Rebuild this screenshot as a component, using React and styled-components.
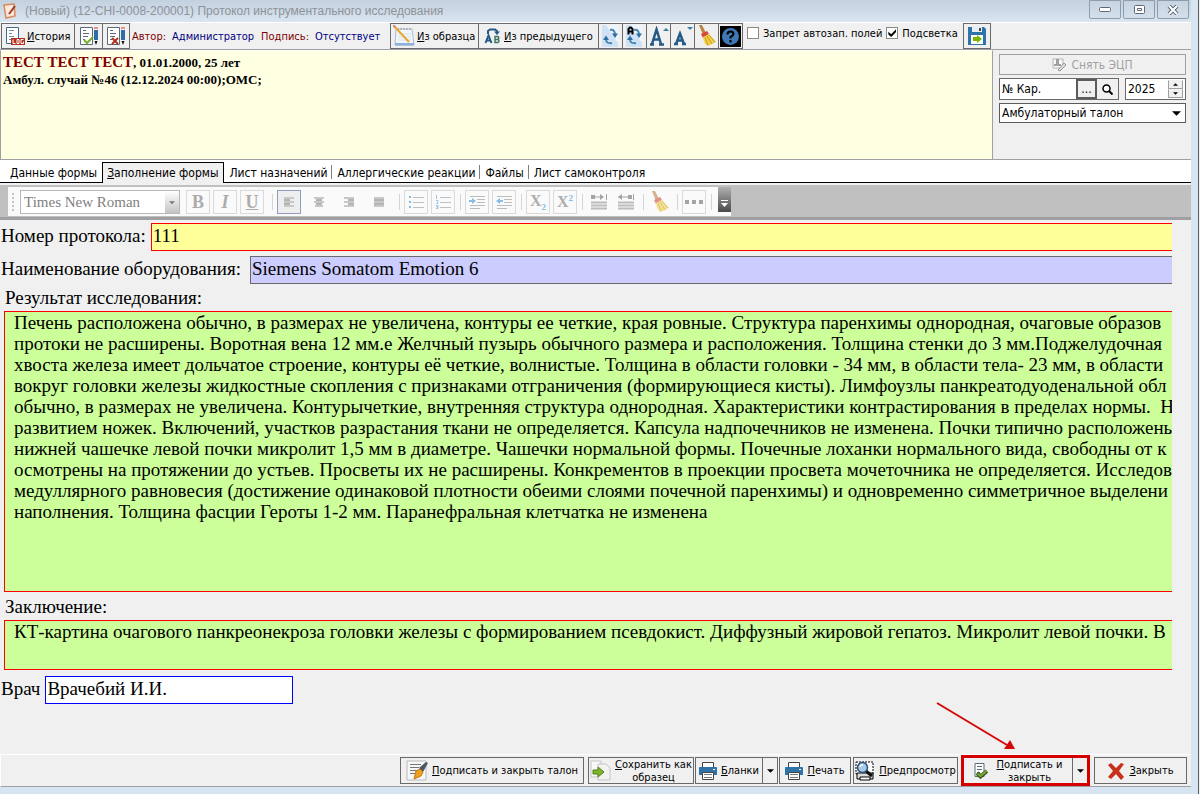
import React, { useState } from "react";
import styled, { createGlobalStyle, css } from "styled-components";

const ui = `"DejaVu Sans Condensed", "DejaVu Sans", sans-serif`;
const serif = `"Liberation Serif", "Times New Roman", serif`;

const Global = createGlobalStyle`
  * { box-sizing: border-box; }
  body { margin: 0; background: #f0f0f0; font-family: ${ui}; font-size: 11px; color: #000; }
  button, input, select, textarea { font: inherit; color: inherit; margin: 0; border-radius: 0; outline: none; }
  svg { display: block; flex: none; }
`;

const Frame = styled.div`
  min-height: 100vh;
  display: flex;
  flex-direction: column;
  padding: 0 7px 7px 0;
  margin-right: 1px;
  background: #d7e4f2;
  border-right: 1px solid #5c5c5c;
`;

/* title bar */

const TitleBar = styled.header`
  display: flex;
  align-items: center;
  height: 22px;
  padding: 0 2px 0 3px;
  background: linear-gradient(#c3d0dd, #d9e5f1);
`;

const Title = styled.h1`
  flex: 1;
  margin: 0 0 0 8px;
  font: 12px "Liberation Sans", sans-serif;
  color: #8d9299;
`;

const WinButtons = styled.div`
  display: flex;
  gap: 2px;
  align-self: flex-start;
`;

const WinButton = styled.button`
  width: 32px;
  height: 19px;
  padding: 0;
  display: flex;
  align-items: center;
  justify-content: center;
  border: 1px solid #8e9cab;
  border-radius: 0 0 2px 2px;
  background: linear-gradient(#c6d3e0, #d3dfec);
`;

/* top toolbar */

const Toolbar = styled.div`
  display: flex;
  align-items: center;
  height: 28px;
  padding: 0 0 0 1px;
  background: #f0f0f0;
  border-top: 1px solid #fff;
  border-bottom: 1px solid #a0a0a4;
`;

const ToolButton = styled.button`
  width: ${(p) => p.$w || 25}px;
  height: 26px;
  margin-right: ${(p) => (p.$last ? 0 : -1)}px;
  padding: 0 0 0 ${(p) => p.$pad || 0}px;
  display: flex;
  align-items: center;
  justify-content: ${(p) => (p.$pad ? "flex-start" : "center")};
  gap: 2px;
  background: #f0f0f0;
  border: 1px solid #696969;
  white-space: nowrap;
`;

const Info = styled.span`
  color: ${(p) => (p.$value ? "#000080" : "#800000")};
  margin-right: ${(p) => (p.$value ? 7 : 6)}px;
  white-space: nowrap;
`;

const InfoGroup = styled.div`
  display: flex;
  width: 260px;
  padding-left: 2px;
`;

const Check = styled.label`
  display: flex;
  align-items: center;
  gap: 4px;
  padding-bottom: 6px;
  margin-left: 4px;
  white-space: nowrap;
  input {
    appearance: none;
    width: 12px;
    height: 12px;
    border: 1px solid #8a8a8a;
    background: #fff;
    display: grid;
    place-content: center;
  }
  input:checked::before {
    content: "";
    width: 8px;
    height: 8px;
    background: #000;
    clip-path: polygon(0 35%, 35% 65%, 100% 0, 100% 35%, 35% 100%, 0 68%);
  }
`;

const Gap = styled.i`
  width: 5px;
`;

/* patient header */

const Header = styled.section`
  display: flex;
  height: 110px;
  background: #f0f0f0;
  border-bottom: 1px solid #a0a0a4;
`;

const Patient = styled.div`
  flex: 1;
  padding: 3px 0 0 2px;
  background: #ffffe1;
  border-left: 1px solid #a0a0a4;
  border-right: 1px solid #a0a0a4;
  border-top: 1px solid #fff;
  font: bold 13px/17px ${serif};
  p { margin: 0; }
  b { font-size: 15px; color: #800000; }
`;

const Side = styled.div`
  width: 198px;
  padding: 4px 5px 0 6px;
  display: flex;
  flex-direction: column;
  gap: 3px;
  font-size: 12px;
`;

const SignButton = styled.button`
  height: 21px;
  display: flex;
  align-items: center;
  justify-content: center;
  gap: 4px;
  background: #f0f0f0;
  border: 1px solid #a0a0a0;
  font-size: 12px;
  color: #a0a0a0;
`;

const SideRow = styled.div`
  display: flex;
  gap: 6px;
`;

const CardBox = styled.div`
  display: flex;
  flex: 1;
  min-width: 0;
  height: 22px;
  border: 1px solid #696969;
  background: #fff;
  input {
    flex: 1;
    width: 0;
    min-width: 0;
    border: 0;
    padding: 0 2px;
  }
`;

const CardButton = styled.button`
  flex: none;
  width: 21px;
  padding: 0;
  display: grid;
  place-items: center;
  background: #f0f0f0;
  border: ${(p) => (p.$strong ? "2px solid #5c5c5c" : "0")};
`;

const YearBox = styled.div`
  display: flex;
  width: 61px;
  height: 22px;
  padding: 1px 2px;
  border: 1px solid #696969;
  background: #fff;
  input {
    flex: 1;
    width: 0;
    min-width: 0;
    border: 0;
    padding: 0;
    background: transparent;
  }
`;

const Spin = styled.div`
  display: flex;
  flex-direction: column;
  width: 15px;
  button {
    flex: 1;
    padding: 0;
    display: grid;
    place-items: center;
    background: #f0f0f0;
    border: 1px solid #a0a0a0;
    border-top-color: #f0f0f0;
  }
`;

const SelectWrap = styled.div`
  position: relative;
  height: 20px;
  border: 1px solid #5c5c5c;
  background: #fff;
  select {
    appearance: none;
    width: 100%;
    height: 100%;
    border: 0;
    padding: 0 2px;
    background: transparent;
  }
  svg {
    position: absolute;
    right: 4px;
    top: 7px;
    pointer-events: none;
  }
`;

/* tabs */

const Tabs = styled.nav`
  display: flex;
  align-items: flex-end;
  height: 23px;
  padding-left: 5px;
  background: #fff;
  border-bottom: 1px solid #000;
  font-size: 12px;
`;

const Tab = styled.button`
  height: 18px;
  padding: 0 5px;
  border: 0;
  background: transparent;
  white-space: nowrap;
  ${(p) => p.$sep && css`
    background: linear-gradient(#808080, #808080) right 1px / 1px 14px no-repeat;
  `}
  ${(p) => p.$active && css`
    height: 21px;
    margin-bottom: -1px;
    padding: 0 5px 0 4px;
    background: #f0f0f0;
    border: 1px solid #000;
    border-bottom: 0;
  `}
`;

/* editor toolbar */

const EditBar = styled.div`
  display: flex;
  height: 37px;
  padding-left: 8px;
  background: #c0c0c0;
  border-top: 2px solid #f0f0f0;
  border-bottom: 3px solid #a0a0a4;
`;

const EditTools = styled.div`
  display: flex;
  align-items: center;
  margin: 2px 0 1px;
  padding-left: 4px;
  background: #fafafa;
`;

const Combo = styled.div`
  position: relative;
  width: 160px;
  height: 24px;
  margin: 0 6px 0 5px;
  border: 1px solid #b8b8b8;
  background: #fff;
  select {
    appearance: none;
    width: 100%;
    height: 100%;
    padding: 0 3px;
    border: 0;
    background: linear-gradient(#fff, #c4c4c4) right / 14px 100% no-repeat;
    font: 15px ${serif};
    color: #808080;
  }
  svg {
    position: absolute;
    right: 4px;
    top: 10px;
    pointer-events: none;
  }
`;

const EditButton = styled.button`
  width: 24px;
  height: 24px;
  margin-right: ${(p) => (p.$wide ? 6 : 3)}px;
  padding: 0;
  display: grid;
  place-items: center;
  background: ${(p) => (p.$active ? "#eeeef0" : "transparent")};
  border: 1px solid ${(p) => (p.$active ? "#8f9dbd" : p.$plain ? "transparent" : "#dadada")};
  font: bold 18px/20px ${serif};
  color: #acacac;
`;

const Script = styled.span`
  font: bold 16px/20px ${serif};
  sub, sup {
    font: bold 9px/8px ${serif};
    color: #86bde2;
  }
`;

const Sep = styled.i`
  width: 1px;
  height: 16px;
  margin: 0 4px 0 2px;
  background: #d4d4d4;
`;

const Grip = styled.i`
  width: 2px;
  height: 18px;
  margin-right: 1px;
  background: repeating-linear-gradient(#c4c4c4 0 2px, transparent 2px 4px);
`;

const More = styled.button`
  align-self: flex-start;
  width: 13px;
  height: 25px;
  margin-left: 2px;
  padding: 0 0 4px;
  display: flex;
  align-items: flex-end;
  justify-content: center;
  border: 0;
  background: linear-gradient(#b0b0b0, #4a4a4a);
`;

const Faded = styled.span`
  opacity: 0.6;
`;

/* form */

const Form = styled.main`
  flex: 1;
  display: flex;
  flex-direction: column;
  padding: 3px 19px 0 0;
  background: #f0f0f0;
  font: 19px/21px ${serif};
`;

const Row = styled.div`
  display: flex;
  align-items: center;
  gap: ${(p) => p.$gap || 5}px;
  height: 28px;
  margin-bottom: 5px;
  padding-left: 1px;
  label { padding-bottom: 3px; }
`;

const Field = styled.input`
  flex: ${(p) => (p.$fixed ? "none" : 1)};
  width: ${(p) => (p.$fixed ? "248px" : "auto")};
  min-width: 0;
  height: 28px;
  padding: 0 1px 3px;
  background: ${(p) => p.$bg};
  border: 1px solid ${(p) => p.$line};
  border-right-width: ${(p) => (p.$fixed ? 1 : 0)}px;
`;

const AreaLabel = styled.label`
  padding-left: 5px;
  height: 22px;
  line-height: 18px;
`;

const Area = styled.textarea`
  display: block;
  height: ${(p) => p.$h}px;
  margin: 0 0 6px 4px;
  padding: 0 0 0 9px;
  resize: none;
  overflow: hidden;
  white-space: pre;
  background: #ccff99;
  border: 1px solid #f00;
  border-right: 0;
`;

/* footer */

const Footer = styled.footer`
  display: flex;
  justify-content: flex-end;
  align-items: center;
  height: 33px;
  padding-right: 4px;
  background: #f0f0f0;
  border-top: 1px solid #fff;
  border-left: 1px solid #fff;
  border-bottom: 1px solid #a0a0a4;
`;

const FootButton = styled.button`
  width: ${(p) => p.$w}px;
  height: 27px;
  margin-left: ${(p) => p.$ml || 0}px;
  padding: 0 2px;
  display: flex;
  align-items: center;
  justify-content: center;
  gap: ${(p) => p.$gap || 4}px;
  background: #f0f0f0;
  border: 1px solid #696969;
  line-height: 13px;
  white-space: nowrap;
`;

const DropButton = styled(FootButton)`
  width: 16px;
  margin-left: -1px;
  padding: 0;
`;

const Marked = styled.div`
  position: relative;
  display: flex;
  margin: 0 4px 0 3px;
  border: 2px solid #d40000;
  outline: 1px solid #d40000;
  outline-offset: -3px;
`;

const Arrow = styled.svg`
  position: absolute;
  right: 72px;
  bottom: 34px;
`;

/* icons */

const Tri = ({ w = 7, up, fill = "#000" }) => (
  <svg width={w} height={(w + 1) / 2} viewBox="0 0 8 4">
    <path d={up ? "M0 4L4 0L8 4Z" : "M0 0H8L4 4Z"} fill={fill} />
  </svg>
);

const LogIcon = () => (
  <svg width="20" height="20" viewBox="0 0 20 20">
    <path d="M1.500 1.500h12v16h-12z" fill="#fff" stroke="#3e6c8c" />
    <path d="M4 4.500h5M4 7.500h3M4 10.500h5M4 13.500h2" stroke="#7b8994" />
    <path d="M6 12h14v7H6z" fill="#b5301c" />
    <path d="M8 13.500v4h2.500M12 13.500h2v4h-2zM18.500 13.500H16v4h2.500v-2" fill="none" stroke="#fff" />
  </svg>
);

const SheetPencil = ({ bad }) => (
  <svg width="20" height="20" viewBox="0 0 20 20">
    <path d="M1.500 1.500h12v17h-12z" fill="#fff" stroke="#5b6b78" />
    <path d="M4 4.500h3M4 7.500h6M4 10.500h5M4 13.500h2" stroke="#5b6b78" />
    <path d="M15 1h4v2h-4z" fill="#e89090" />
    <path d="M15 4h4v10h-4z" fill="#2f6ea5" />
    <path d="M15.500 15h3L17 19z" fill="#111" />
    {bad
      ? <path d="M6 12l6 6M12 12l-6 6" stroke="#b5301c" strokeWidth="2" />
      : <path d="M5 14l3 3 6-6" fill="none" stroke="#79ad2a" strokeWidth="2" />}
  </svg>
);

const NoteIcon = () => (
  <svg width="22" height="22" viewBox="0 0 22 22">
    <path d="M3 4h16l2 16H2z" fill="#f2f6fb" stroke="#a9bdd4" />
    <path d="M2 18h19v2.500H2z" fill="#8db2dc" />
    <path d="M5 5V3M8 5V3M11 5V3M14 5V3M17 5V3" stroke="#9a9a9a" />
    <path d="M5 9h13M5 12h13M5 15h13" stroke="#d7e0ea" />
    <path d="M1 1l15 16" stroke="#e9a92c" strokeWidth="2" />
    <path d="M0 0l2.500 2.500" stroke="#c88" strokeWidth="2" />
  </svg>
);

const FromPrevIcon = () => (
  <svg width="18" height="16" viewBox="0 0 18 16">
    <path d="M4 6V3l2-1.500h5L13 3v1" fill="none" stroke="#245a85" strokeWidth="2" />
    <path d="M10 3.500h6L13 7z" fill="#245a85" />
    <path d="M1.500 15l3-7.500 3 7.500M2.500 12.500h4" fill="none" stroke="#245a85" strokeWidth="2" />
    <path d="M11 8.500v6h3q2-1.500 0-3h-3 3q1.500-1.500 0-3z" fill="none" stroke="#3f7560" strokeWidth="1.500" />
  </svg>
);

const RefreshIcon = ({ mark }) => (
  <svg width="17" height="22" viewBox="0 0 17 22">
    <path d="M0 0h16v22H0z" fill="#cfe1f5" />
    <path d="M4 0h12v18z" fill="#eef5fd" />
    <path d="M8 5q5-1 5 5" fill="none" stroke="#4a86ad" strokeWidth="2" />
    <path d="M10 8.500h6L13 13z" fill="#2f6ea5" />
    <path d="M10 18q-6 1-6-4" fill="none" stroke="#4a86ad" strokeWidth="2" />
    <path d="M1 15h6l-3-4.500z" fill="#2f6ea5" />
    {mark && <path d="M2.500 9.500V4L4 2.500h1L6.500 4v5.500M2.500 6.500h4" fill="none" stroke="#000" strokeWidth="2" />}
  </svg>
);

const LetterIcon = ({ small }) => (
  <svg width="20" height="20" viewBox="0 0 20 20">
    {small
      ? <path d="M3 18L7 7.500 11 18M4.500 14.500h5M1 18h4M9 18h4" fill="none" stroke="#245a85" strokeWidth="2.500" />
      : <path d="M3 18L7.500 3.500 12 18M4.500 13.500h7M1 18.500h4M10 18.500h5" fill="none" stroke="#245a85" strokeWidth="2.500" />}
    <path d={small ? "M14 1h6l-3 3z" : "M14 5h6l-3-3z"} fill="#3a7ca8" />
  </svg>
);

const Broom = () => (
  <svg width="20" height="22" viewBox="0 0 20 22">
    <path d="M2 0l3 0 4 8-3 2z" fill="#b98545" />
    <path d="M4 9l6-3 2 3-6 4z" fill="#d64a3c" />
    <path d="M6 12l6-3 7 8-8 4q-4-1-5-9z" fill="#f0cf4a" />
    <path d="M8 12l3 8M10 11l5 8M12 10l6 7" stroke="#c99d22" />
  </svg>
);

const HelpIcon = () => (
  <svg width="21" height="21" viewBox="0 0 21 21">
    <path d="M0 0h21v21H0z" fill="#000" />
    <circle cx="10.500" cy="10.500" r="8.500" fill="#3f78b5" />
    <path d="M7.500 8.500q0-3 3-3t3 2.500q0 1.500-3 3v1.500M10.500 14v2.500" fill="none" stroke="#000" strokeWidth="2" />
  </svg>
);

const SaveIcon = () => (
  <svg width="18" height="18" viewBox="0 0 18 18">
    <path d="M0 0h16l2 2v16H0z" fill="#2f74a8" />
    <path d="M4 0h10v5H4z" fill="#e8eef3" />
    <path d="M11 1h2v3h-2z" fill="#444" />
    <path d="M3 8h12v9H3z" fill="#fff" />
    <path d="M5 10h4V8l5 4-5 4v-2H5z" fill="#79b800" />
  </svg>
);

const SignIcon = () => (
  <svg width="15" height="14" viewBox="0 0 15 14">
    <path d="M1 1h10v9H1z" fill="#f8f8f8" stroke="#b4b4b4" />
    <path d="M4 1h3v5H4zM2 6h7v2H2z" fill="#a0a0a0" />
    <path d="M6 12l6-7 2 2-6 6z" fill="#ddd" stroke="#979797" />
  </svg>
);

const Lines = ({ rows }) => (
  <svg width="16" height="12" viewBox="0 0 16 12">
    {rows.map(([x, w], i) => <rect key={i} x={x} y={1 + i * 2} width={w} height="2" fill={i % 2 ? "#b4b4b4" : "#c8c8c8"} />)}
  </svg>
);

const ListIcon = ({ numbered }) => (
  <svg width="16" height="14" viewBox="0 0 16 14">
    <path d="M5 2.500h11M5 7.500h11M5 12.500h11" stroke="#c0c0c0" />
    {numbered
      ? <path d="M1.500 0v4M1 5.500h2v1.500l-1.500 1.500H3M1 10.500h2v3H1M1 12h2" fill="none" stroke="#9cc6e2" />
      : <path d="M1 1h2v2H1zM1 6h2v2H1zM1 11h2v2H1z" fill="#86bde2" />}
  </svg>
);

const IndentIcon = ({ out }) => (
  <svg width="16" height="14" viewBox="0 0 16 14">
    <path d="M1 1.500h15M8 4.500h8M8 7.500h8M1 10.500h15M1 13.500h10" stroke="#bcbcbc" />
    <path d={out ? "M0 6l4-3v2h3v2H4v2z" : "M7 6L3 3v2H0v2h3v2z"} fill="#86bde2" />
  </svg>
);

const SpacingIcon = ({ out }) => (
  <svg width="18" height="18" viewBox="0 0 18 18">
    <path d="M1 9.500h16M1 12.500h16M1 15.500h16" stroke="#bcbcbc" strokeWidth="2" />
    <path d="M1 4h12M16.500 1v6" stroke="#a4a4a4" />
    <path d={out ? "M1 4l4-3v6zM11 2h4v4h-4z" : "M1 2h4v4H1zM14 4l-4-3v6z"} fill="#a4a4a4" />
  </svg>
);

const PenSheetIcon = () => (
  <svg width="22" height="21" viewBox="0 0 22 21">
    <path d="M1 1h19v19H1z" fill="#f7f7f7" stroke="#b9b9b9" />
    <path d="M4 4.500h11M4 7.500h9M4 10.500h7M4 13.500h5" stroke="#777" />
    <path d="M13 8l7-6 2 1-5 9z" fill="#4f5860" />
    <path d="M8 19l2-8 4-2 3 3-2 4z" fill="#f0a020" stroke="#c07a10" />
  </svg>
);

const CopyIcon = () => (
  <svg width="21" height="21" viewBox="0 0 21 21">
    <path d="M1 1h10v16H1z" fill="#f8f8f8" stroke="#c4c4c4" />
    <path d="M8 4h8l4 4v12H8z" fill="#f2f2f2" stroke="#c4c4c4" />
    <path d="M3 10h5V7l6 5-6 5v-3H3z" fill="#7fb52c" stroke="#4f8212" />
  </svg>
);

const PrinterIcon = () => (
  <svg width="18" height="18" viewBox="0 0 18 18">
    <path d="M3.500 .5h11v6h-11z" fill="#fff" stroke="#444" />
    <path d="M0 6q0-1 1-1h16q1 0 1 1v7H0z" fill="#2f74a8" />
    <path d="M14 7h2v1h-2z" fill="#fff" />
    <path d="M3.500 10.500h11v7h-11z" fill="#fff" stroke="#444" />
    <path d="M5 12.500h8M5 15.500h8" stroke="#777" />
  </svg>
);

const PreviewIcon = () => (
  <svg width="20" height="20" viewBox="0 0 20 20">
    <path d="M1 1h17v12H1z" fill="#fff" stroke="#000" strokeDasharray="2 1" />
    <path d="M2 12h16v6H2z" fill="#dcdcdc" stroke="#000" />
    <path d="M5 16h10v3H5z" fill="#fff" stroke="#000" />
    <path d="M11 10l6 5" stroke="#111" strokeWidth="3" />
    <circle cx="7.500" cy="6.500" r="5" fill="#a9cbe8" stroke="#29527a" strokeWidth="1.500" />
    <path d="M5 6q1-3 3-2" fill="none" stroke="#fff" strokeWidth="1.500" />
  </svg>
);

const SheetCheckIcon = () => (
  <svg width="14" height="16" viewBox="0 0 14 16">
    <path d="M1 .5h9v13H1z" fill="#fff" stroke="#5b6b78" />
    <path d="M3 3.500h5M3 6.500h5M3 9.500h3" stroke="#5b6b78" />
    <path d="M3 10l3.500 3.500L13 8" fill="none" stroke="#3d5a1e" strokeWidth="4" />
    <path d="M3.500 10.500l3 2.500 6-5" fill="none" stroke="#7ba83c" strokeWidth="2" />
  </svg>
);

const CrossIcon = () => (
  <svg width="18" height="18" viewBox="0 0 18 18">
    <path d="M1 3l3-2 5 5 5-5 3 1-5 7 5 6-3 3-5-6-5 5-3-2 5-6z" fill="#c9301c" />
  </svg>
);

const resultText = `Печень расположена обычно, в размерах не увеличена, контуры ее четкие, края ровные. Структура паренхимы однородная, очаговые образов
протоки не расширены. Воротная вена 12 мм.е Желчный пузырь обычного размера и расположения. Толщина стенки до 3 мм.Поджелудочная
хвоста железа имеет дольчатое строение, контуры её четкие, волнистые. Толщина в области головки - 34 мм, в области тела- 23 мм, в области
вокруг головки железы жидкостные скопления с признаками отграничения (формирующиеся кисты). Лимфоузлы панкреатодуоденальной обл
обычно, в размерах не увеличена. Контурычеткие, внутренняя структура однородная. Характеристики контрастирования в пределах нормы.  Н
развитием ножек. Включений, участков разрастания ткани не определяется. Капсула надпочечников не изменена. Почки типично расположены
нижней чашечке левой почки микролит 1,5 мм в диаметре. Чашечки нормальной формы. Почечные лоханки нормального вида, свободны от к
осмотрены на протяжении до устьев. Просветы их не расширены. Конкрементов в проекции просвета мочеточника не определяется. Исследов
медуллярного равновесия (достижение одинаковой плотности обеими слоями почечной паренхимы) и одновременно симметричное выделени
наполнения. Толщина фасции Героты 1-2 мм. Паранефральная клетчатка не изменена`;

const conclusionText =
  "КТ-картина очагового панкреонекроза головки железы с формированием псевдокист. Диффузный жировой гепатоз. Микролит левой почки. В";

const tabs = [
  { key: "data", label: <><u>Д</u>анные формы</> },
  { key: "fill", label: <><u>З</u>аполнение формы</> },
  { key: "orders", label: "Лист назначений", sep: true },
  { key: "allergy", label: "Аллергические реакции", sep: true },
  { key: "files", label: "Файлы", sep: true },
  { key: "self", label: "Лист самоконтроля" },
];

const alignRows = {
  left: [[3, 10], [3, 6], [3, 10], [3, 6], [3, 10]],
  center: [[3, 10], [5, 6], [3, 10], [5, 6], [4, 8]],
  right: [[3, 10], [7, 6], [3, 10], [7, 6], [3, 10]],
  full: [[3, 10], [3, 10], [3, 10], [3, 10], [3, 10]],
};

const TopToolbar = () => {
  const [noAuto, setNoAuto] = useState(false);
  const [highlight, setHighlight] = useState(true);
  return (
    <Toolbar>
      <ToolButton $w={74} $pad={3}><LogIcon /><span><u>И</u>стория</span></ToolButton>
      <ToolButton $w={29} aria-label="Подписать"><SheetPencil /></ToolButton>
      <ToolButton $w={28} $last aria-label="Снять подпись"><SheetPencil bad /></ToolButton>
      <InfoGroup>
        <Info>Автор:</Info>
        <Info $value>Администратор</Info>
        <Info>Подпись:</Info>
        <Info $value>Отсутствует</Info>
      </InfoGroup>
      <ToolButton $w={89} $pad={2}><NoteIcon /><span><u>И</u>з образца</span></ToolButton>
      <ToolButton $w={121} $pad={5}><FromPrevIcon /><span><u>И</u>з предыдущего</span></ToolButton>
      <ToolButton aria-label="Обновить"><RefreshIcon /></ToolButton>
      <ToolButton aria-label="Обновить всё"><RefreshIcon mark /></ToolButton>
      <ToolButton aria-label="Увеличить шрифт"><LetterIcon /></ToolButton>
      <ToolButton aria-label="Уменьшить шрифт"><LetterIcon small /></ToolButton>
      <ToolButton aria-label="Очистить"><Broom /></ToolButton>
      <ToolButton $last aria-label="Справка"><HelpIcon /></ToolButton>
      <Check>
        <input type="checkbox" checked={noAuto} onChange={(e) => setNoAuto(e.target.checked)} />
        Запрет автозап. полей
      </Check>
      <Check>
        <input type="checkbox" checked={highlight} onChange={(e) => setHighlight(e.target.checked)} />
        Подсветка
      </Check>
      <Gap />
      <ToolButton $w={28} $last aria-label="Сохранить"><SaveIcon /></ToolButton>
    </Toolbar>
  );
};

const EditorBar = () => (
  <EditBar>
    <EditTools>
      <Grip />
      <Combo>
        <select aria-label="Шрифт" defaultValue="tnr">
          <option value="tnr">Times New Roman</option>
        </select>
        <Tri w={6} fill="#777" />
      </Combo>
      <EditButton>B</EditButton>
      <EditButton><em>I</em></EditButton>
      <EditButton $wide><u>U</u></EditButton>
      <Sep />
      <EditButton $wide $active aria-label="По левому краю"><Lines rows={alignRows.left} /></EditButton>
      <EditButton $wide $plain aria-label="По центру"><Lines rows={alignRows.center} /></EditButton>
      <EditButton $wide $plain aria-label="По правому краю"><Lines rows={alignRows.right} /></EditButton>
      <EditButton $wide $plain aria-label="По ширине"><Lines rows={alignRows.full} /></EditButton>
      <Sep />
      <EditButton aria-label="Маркеры"><ListIcon /></EditButton>
      <EditButton aria-label="Нумерация"><ListIcon numbered /></EditButton>
      <Sep />
      <EditButton aria-label="Увеличить отступ"><IndentIcon /></EditButton>
      <EditButton aria-label="Уменьшить отступ"><IndentIcon out /></EditButton>
      <Sep />
      <EditButton><Script>X<sub>2</sub></Script></EditButton>
      <EditButton><Script>X<sup>2</sup></Script></EditButton>
      <Sep />
      <EditButton $plain aria-label="Интервал"><SpacingIcon /></EditButton>
      <EditButton $plain aria-label="Интервал обратно"><SpacingIcon out /></EditButton>
      <Sep />
      <EditButton $plain aria-label="Очистить формат"><Faded><Broom /></Faded></EditButton>
      <Sep />
      <EditButton aria-label="Ещё">
        <svg width="18" height="4" viewBox="0 0 18 4"><path d="M0 0h4v4H0zM7 0h4v4H7zM14 0h4v4h-4z" fill="#a4a4a4" /></svg>
      </EditButton>
      <Sep />
      <More aria-label="Параметры панели">
        <svg width="7" height="8" viewBox="0 0 7 8"><path d="M0 .5h7" stroke="#fff" /><path d="M0 3h7L3.500 7z" fill="#fff" /></svg>
      </More>
    </EditTools>
  </EditBar>
);

const App = () => {
  const [tab, setTab] = useState("fill");
  const [year, setYear] = useState(2025);

  return (
    <>
      <Global />
      <Frame>
        <TitleBar>
          <svg width="14" height="16" viewBox="0 0 14 16">
            <path d="M1 2l10-1 1 12-9 2z" fill="#fbe9dc" stroke="#d98a5c" strokeWidth="1.500" />
            <path d="M12 3l-6 8" stroke="#a33a22" strokeWidth="2" />
          </svg>
          <Title>(Новый) (12-CHI-0008-200001) Протокол инструментального исследования</Title>
          <WinButtons>
            <WinButton aria-label="Свернуть">
              <svg width="12" height="5"><rect x=".5" y=".5" width="11" height="4" rx="1" fill="#fff" stroke="#5f6874" /></svg>
            </WinButton>
            <WinButton aria-label="Развернуть">
              <svg width="11" height="9"><rect x=".5" y=".5" width="10" height="8" rx="1" fill="#fff" stroke="#5f6874" /><path d="M3.500 3.500h4v2h-4z" fill="none" stroke="#5f6874" /></svg>
            </WinButton>
            <WinButton aria-label="Закрыть окно">
              <svg width="12" height="10" viewBox="0 0 12 10"><path d="M2 1l8 8M10 1l-8 8" stroke="#5f6874" strokeWidth="4" /><path d="M2 1l8 8M10 1l-8 8" stroke="#fff" strokeWidth="2" /></svg>
            </WinButton>
          </WinButtons>
        </TitleBar>

        <TopToolbar />

        <Header>
          <Patient>
            <p><b>ТЕСТ ТЕСТ ТЕСТ</b>, 01.01.2000, 25 лет</p>
            <p>Амбул. случай №46 (12.12.2024 00:00);ОМС;</p>
          </Patient>
          <Side>
            <SignButton disabled><SignIcon />Снять ЭЦП</SignButton>
            <SideRow>
              <CardBox>
                <input aria-label="Номер карты" defaultValue="№ Кар." />
                <CardButton $strong>...</CardButton>
                <CardButton aria-label="Найти">
                  <svg width="11" height="11" viewBox="0 0 11 11"><circle cx="4.500" cy="4.500" r="3.500" fill="#fff" stroke="#000" strokeWidth="1.500" /><path d="M7 7l3.500 3.500" stroke="#000" strokeWidth="2" /></svg>
                </CardButton>
              </CardBox>
              <YearBox>
                <input aria-label="Год" value={year} onChange={(e) => setYear(e.target.value)} />
                <Spin>
                  <button aria-label="Больше" onClick={() => setYear(Number(year) + 1)}><Tri w={5} up /></button>
                  <button aria-label="Меньше" onClick={() => setYear(Number(year) - 1)}><Tri w={5} /></button>
                </Spin>
              </YearBox>
            </SideRow>
            <SelectWrap>
              <select aria-label="Тип талона" defaultValue="amb">
                <option value="amb">Амбулаторный талон</option>
              </select>
              <Tri w={9} />
            </SelectWrap>
          </Side>
        </Header>

        <Tabs>
          {tabs.map((t) => (
            <Tab key={t.key} $active={t.key === tab} $sep={t.sep} onClick={() => setTab(t.key)}>
              {t.label}
            </Tab>
          ))}
        </Tabs>

        <EditorBar />

        <Form>
          <Row>
            <label htmlFor="number">Номер протокола:</label>
            <Field id="number" $bg="#ffff99" $line="#f00" defaultValue="111" />
          </Row>
          <Row $gap={9}>
            <label htmlFor="device">Наименование оборудования:</label>
            <Field id="device" $bg="#ccccff" $line="#696969" defaultValue="Siemens Somatom Emotion 6" />
          </Row>
          <AreaLabel htmlFor="result">Результат исследования:</AreaLabel>
          <Area id="result" $h={281} wrap="off" spellCheck={false} defaultValue={resultText} />
          <AreaLabel htmlFor="conclusion">Заключение:</AreaLabel>
          <Area id="conclusion" $h={50} wrap="off" spellCheck={false} defaultValue={conclusionText} />
          <Row>
            <label htmlFor="doctor">Врач</label>
            <Field id="doctor" $fixed $bg="#fff" $line="#00f" defaultValue="Врачебий И.И." />
          </Row>
        </Form>

        <Footer>
          <FootButton $w={184}><PenSheetIcon /><span><u>П</u>одписать и закрыть талон</span></FootButton>
          <FootButton $w={106} $ml={4}><CopyIcon /><span><u>С</u>охранить как<br />образец</span></FootButton>
          <FootButton $w={68} $ml={1}><PrinterIcon /><span><u>Б</u>ланки</span></FootButton>
          <DropButton aria-label="Список бланков"><Tri /></DropButton>
          <FootButton $w={72} $ml={1}><PrinterIcon /><span><u>П</u>ечать</span></FootButton>
          <FootButton $w={105} $ml={2}><PreviewIcon /><span><u>П</u>редпросмотр</span></FootButton>
          <Marked>
            <FootButton $w={110} $gap={9}><SheetCheckIcon /><span><u>П</u>одписать и<br />закрыть</span></FootButton>
            <DropButton aria-label="Варианты подписи"><Tri /></DropButton>
            <Arrow width="80" height="48" viewBox="0 0 80 48">
              <path d="M1 1L71 43" stroke="#d40808" strokeWidth="2" />
              <path d="M79 47l-11 0 6-9z" fill="#d40808" />
            </Arrow>
          </Marked>
          <FootButton $w={93}><CrossIcon /><span><u>З</u>акрыть</span></FootButton>
        </Footer>
      </Frame>
    </>
  );
};

export default App;
